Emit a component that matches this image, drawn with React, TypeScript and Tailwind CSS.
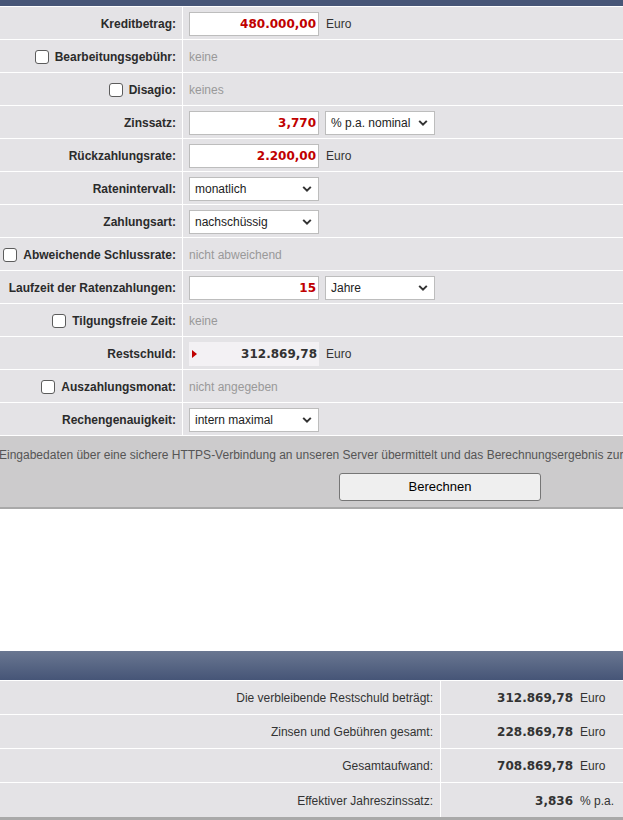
import React from "react";

const valueFont = "font-['DejaVu_Sans',Verdana,sans-serif]";

function Chevron() {
  return (
    <svg width="10" height="7" viewBox="0 0 10 7" className="absolute right-[6px] top-1/2 -translate-y-1/2">
      <path d="M1.2 1.4 L5 5.2 L8.8 1.4" fill="none" stroke="#333" strokeWidth="2" />
    </svg>
  );
}

function Select({ value, width }: { value: string; width: string }) {
  return (
    <div className={`relative h-[24px] ${width} bg-white border border-[#bdbdbd] flex items-center pl-[5px] text-[12px] text-[#222]`}>
      {value}
      <Chevron />
    </div>
  );
}

function NumInput({ value }: { value: string }) {
  return (
    <div className={`h-[24px] w-[130px] bg-white border border-[#bdbdbd] flex items-center justify-end pr-[2px] text-[12px] font-bold text-[#c00000] ${valueFont}`}>
      {value}
    </div>
  );
}

function Checkbox() {
  return <span className="inline-block w-[14px] h-[14px] rounded-[3px] border border-[#5c5c5c] bg-white shrink-0" />;
}

function Row({ label, checkbox, children }: { label: string; checkbox?: boolean; children?: React.ReactNode }) {
  return (
    <div className="flex h-[33px] border-b border-white">
      <div className="w-[183px] shrink-0 border-r border-white flex items-center justify-end gap-[6px] pr-[6px] pt-[1px] text-[12px] font-bold text-[#2b2b2b]">
        {checkbox && <Checkbox />}
        <span>{label}</span>
      </div>
      <div className="flex-1 flex items-center gap-[6px] pl-[6px] pt-[1px]">{children}</div>
    </div>
  );
}

const Muted = ({ children }: { children: React.ReactNode }) => (
  <span className="text-[12px] text-[#999]">{children}</span>
);
const Unit = ({ children }: { children: React.ReactNode }) => (
  <span className="text-[12px] text-[#333] ml-[1px]">{children}</span>
);

const results = [
  { label: "Die verbleibende Restschuld beträgt:", value: "312.869,78", unit: "Euro" },
  { label: "Zinsen und Gebühren gesamt:", value: "228.869,78", unit: "Euro" },
  { label: "Gesamtaufwand:", value: "708.869,78", unit: "Euro" },
  { label: "Effektiver Jahreszinssatz:", value: "3,836", unit: "% p.a." },
];

export default function App() {
  return (
    <div className="w-[623px] h-[820px] overflow-hidden bg-white font-['Liberation_Sans',Arial,sans-serif]">
      <div className="h-[7px] bg-[#475677] border-b border-white" />

      {/* input form */}
      <div className="bg-[#e4e3e6]">
        <Row label="Kreditbetrag:">
          <NumInput value="480.000,00" />
          <Unit>Euro</Unit>
        </Row>
        <Row label="Bearbeitungsgebühr:" checkbox>
          <Muted>keine</Muted>
        </Row>
        <Row label="Disagio:" checkbox>
          <Muted>keines</Muted>
        </Row>
        <Row label="Zinssatz:">
          <NumInput value="3,770" />
          <Select value="% p.a. nominal" width="w-[110px]" />
        </Row>
        <Row label="Rückzahlungsrate:">
          <NumInput value="2.200,00" />
          <Unit>Euro</Unit>
        </Row>
        <Row label="Ratenintervall:">
          <Select value="monatlich" width="w-[130px]" />
        </Row>
        <Row label="Zahlungsart:">
          <Select value="nachschüssig" width="w-[130px]" />
        </Row>
        <Row label="Abweichende Schlussrate:" checkbox>
          <Muted>nicht abweichend</Muted>
        </Row>
        <Row label="Laufzeit der Ratenzahlungen:">
          <NumInput value="15" />
          <Select value="Jahre" width="w-[110px]" />
        </Row>
        <Row label="Tilgungsfreie Zeit:" checkbox>
          <Muted>keine</Muted>
        </Row>
        <Row label="Restschuld:">
          <div className={`h-[24px] w-[130px] bg-[#f3f1f4] flex items-center justify-between pl-[3px] pr-[2px] text-[12px] font-bold text-[#333] ${valueFont}`}>
            <svg width="5" height="8" viewBox="0 0 5 8">
              <path d="M0 0 L5 4 L0 8 Z" fill="#c00000" />
            </svg>
            <span>312.869,78</span>
          </div>
          <Unit>Euro</Unit>
        </Row>
        <Row label="Auszahlungsmonat:" checkbox>
          <Muted>nicht angegeben</Muted>
        </Row>
        <Row label="Rechengenauigkeit:">
          <Select value="intern maximal" width="w-[130px]" />
        </Row>
      </div>

      {/* submit area */}
      <div className="bg-[#cccbcc] border-b-2 border-[#a9a9a9] pt-[11px] pb-[6px] overflow-hidden">
        <p className="whitespace-nowrap text-[12px] leading-[16px] text-[#555] -ml-[1px]">
          Eingabedaten über eine sichere HTTPS-Verbindung an unseren Server übermittelt und das Berechnungsergebnis zurückgesendet.
        </p>
        <button className="mt-[10px] ml-[339px] w-[202px] h-[28px] bg-[#efefef] border border-[#767676] rounded-[3px] text-[13px] text-black">
          Berechnen
        </button>
      </div>

      <div className="h-[142px]" />

      {/* results */}
      <div className="h-[30px] bg-gradient-to-b from-[#6a7791] to-[#465577] border-b border-white" />
      <div className="bg-[#e4e3e6] border-b-[3px] border-[#a9a9a9]">
        {results.map((r) => (
          <div key={r.label} className="flex h-[34px] border-b border-white last:border-b-0">
            <div className="w-[441px] shrink-0 border-r border-white flex items-center justify-end pr-[7px] pt-[1px] text-[12px] text-[#333]">
              {r.label}
            </div>
            <div className="flex-1 flex items-center pt-[1px]">
              <span className={`w-[132px] text-right text-[12px] font-bold text-[#333] ${valueFont}`}>{r.value}</span>
              <span className="ml-[7px] text-[12px] text-[#333]">{r.unit}</span>
            </div>
          </div>
        ))}
      </div>
    </div>
  );
}
